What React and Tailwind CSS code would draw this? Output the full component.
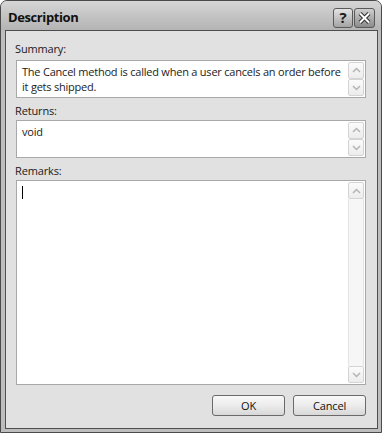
import React from "react";

const font = { fontFamily: '"Open Sans", "Noto Sans", sans-serif' };

const ScrollButton = ({ dir }) => (
  <div className="w-[16px] h-[17px] border border-[#d4d4d4] rounded-[2px] bg-gradient-to-b from-[#fbfbfb] to-[#ececec] flex items-center justify-center">
    <svg width="9" height="6" viewBox="0 0 9 6">
      <path
        d={dir === "up" ? "M1 5 L4.5 1.5 L8 5" : "M1 1 L4.5 4.5 L8 1"}
        fill="none"
        stroke="#b4b4b4"
        strokeWidth="1.5"
      />
    </svg>
  </div>
);

const TextBox = ({ height, children, tall }) => (
  <div
    className={`ml-[10px] w-[350px] ${height} border border-[#a8a8a8] bg-white flex`}
  >
    <div className="flex-1 min-w-0 pl-[5px] pt-[3px] text-[11px] tracking-[-0.22px] leading-[15px] text-[#222] whitespace-nowrap overflow-hidden">
      {children}
    </div>
    <div className="w-[16px] shrink-0 mr-[1px] mt-[1px] mb-[1px] flex flex-col">
      <ScrollButton dir="up" />
      {tall ? (
        <div className="flex-1 border-x border-[#e4e4e4] bg-[#f6f6f6]" />
      ) : (
        <div className="h-[1px]" />
      )}
      <ScrollButton dir="down" />
    </div>
  </div>
);

const Label = ({ children, className = "" }) => (
  <div className={`pl-[9px] h-[18px] leading-[18px] text-[11px] tracking-[-0.15px] text-[#1a1a1a] ${className}`}>
    {children}
  </div>
);

const DialogButton = ({ children }) => (
  <button className="w-[73px] h-[21px] border border-[#6a6a6a] rounded-[3px] bg-gradient-to-b from-[#f8f8f8] via-[#ececec] to-[#d8d8d8] text-[11px] tracking-[-0.15px] text-[#111] leading-[19px]">
    {children}
  </button>
);

export default function App() {
  return (
    <div
      style={font}
      className="w-[382px] h-[433px] border border-[#4a4a4a] rounded-t-[7px] bg-[#bdbdbd] flex flex-col overflow-hidden"
    >
      {/* Title bar */}
      <div className="h-[29px] flex items-center bg-gradient-to-b from-[#d6d6d6] via-[#c4c4c4] to-[#b4b4b4] pl-[7px] pr-[6px]">
        <div className="flex-1 text-[13px] tracking-[-0.4px] font-bold text-[#111] leading-none pt-[3px]">
          Description
        </div>
        <div className="flex gap-[1px] pt-[4px]">
          <div className="w-[20px] h-[20px] border border-[#5a5a5a] rounded-[3px] bg-gradient-to-b from-[#e4e4e4] to-[#a4a4a4] flex items-center justify-center text-[15px] font-bold text-[#1a1a1a] leading-none">
            ?
          </div>
          <div className="w-[21px] h-[20px] border border-[#5a5a5a] rounded-[3px] bg-gradient-to-b from-[#cfcfcf] to-[#8c8c8c] flex items-center justify-center">
            <svg width="13" height="12" viewBox="0 0 13 12">
              <path d="M2 1.5 L11 10.5 M11 1.5 L2 10.5" stroke="#333" strokeWidth="4" />
              <path d="M2 1.5 L11 10.5 M11 1.5 L2 10.5" stroke="#fff" strokeWidth="2" />
            </svg>
          </div>
        </div>
      </div>

      {/* Client */}
      <div className="flex-1 ml-[4px] mr-[3px] mb-[3px] border border-[#4e4e4e] bg-[#e1e1e1] flex flex-col pt-[9px]">
        <Label>Summary:</Label>
        <div className="mt-[2px]">
          <TextBox height="h-[38px]">
            The Cancel method is called when a user cancels an order before
            <br />
            it gets shipped.
          </TextBox>
        </div>
        <Label className="mt-[4px]">Returns:</Label>
        <TextBox height="h-[38px]">void</TextBox>
        <Label className="mt-[4px]">Remarks:</Label>
        <TextBox height="h-[205px]" tall>
          <div className="w-[1px] h-[13px] bg-black mt-[2px]" />
        </TextBox>
        <div className="mt-[10px] flex justify-end gap-[8px] pr-[11px]">
          <DialogButton>OK</DialogButton>
          <DialogButton>Cancel</DialogButton>
        </div>
      </div>
    </div>
  );
}
